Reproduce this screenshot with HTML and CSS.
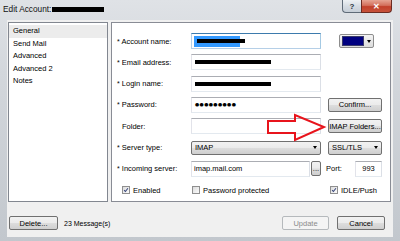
FILE: index.html
```html
<!DOCTYPE html>
<html>
<head>
<meta charset="utf-8">
<link rel="stylesheet" href="styles.css">
</head>
<body>
<div class="window">
  <div class="titlebar">
    <span class="title">Edit Account:</span><span class="redact title-redact"></span>
    <div class="caption">
      <span class="cap cap-help">?</span>
      <span class="cap cap-close">&#x2715;</span>
    </div>
  </div>
  <div class="client">
    <div class="main">
      <ul class="nav">
        <li class="sel">General</li>
        <li>Send Mail</li>
        <li>Advanced</li>
        <li>Advanced 2</li>
        <li>Notes</li>
      </ul>
      <div class="panel">
        <div class="form">
          <div class="row">
            <label class="lbl"><span class="ast">*</span> Account name:</label>
            <div class="inp focus w130"><span class="hl"><span class="redact bar-a"></span></span></div>
            <div class="colorpick"><span class="swatch"></span><span class="cp-drop"><span class="tri"></span></span></div>
          </div>
          <div class="row">
            <label class="lbl"><span class="ast">*</span> Email address:</label>
            <div class="inp w130"><span class="redact bar-b"></span></div>
          </div>
          <div class="row">
            <label class="lbl"><span class="ast">*</span> Login name:</label>
            <div class="inp w130"><span class="redact bar-b"></span></div>
          </div>
          <div class="row">
            <label class="lbl"><span class="ast">*</span> Password:</label>
            <div class="inp w130"><span class="dots">●●●●●●●●●</span></div>
            <button class="btn col3">Confirm...</button>
          </div>
          <div class="row">
            <label class="lbl plain">Folder:</label>
            <div class="inp w130"></div>
            <button class="btn col3">IMAP Folders...</button>
          </div>
          <div class="row">
            <label class="lbl"><span class="ast">*</span> Server type:</label>
            <div class="combo w130"><span>IMAP</span><span class="tri"></span></div>
            <div class="combo col3"><span>SSL/TLS</span><span class="tri"></span></div>
          </div>
          <div class="row">
            <label class="lbl"><span class="ast">*</span> Incoming server:</label>
            <div class="inp w119">imap.mail.com</div>
            <button class="btn dots-btn">...</button>
            <span class="port-lbl">Port:</span>
            <div class="inp port">993</div>
          </div>
          <div class="row checks">
            <label class="chk c1"><span class="box on"><svg viewBox="0 0 8 8"><path d="M1.5 4.2 L3.2 6 L6.6 1.6" /></svg></span>Enabled</label>
            <label class="chk c2"><span class="box"></span>Password protected</label>
            <label class="chk c3"><span class="box on"><svg viewBox="0 0 8 8"><path d="M1.5 4.2 L3.2 6 L6.6 1.6" /></svg></span>IDLE/Push</label>
          </div>
        </div>
      </div>
    </div>
    <div class="footer">
      <button class="btn del">Delete...</button>
      <span class="msgs">23 Message(s)</span>
      <button class="btn upd" disabled>Update</button>
      <button class="btn cancel">Cancel</button>
    </div>
  </div>
  <svg class="arrow" width="400" height="241" viewBox="0 0 400 241">
    <polygon points="268,121 295,121 295,115 324,127 295,140 295,133 268,133" />
  </svg>
</div>
</body>
</html>
```
FILE: styles.css
```css
* { box-sizing: border-box; }
html, body { margin: 0; padding: 0; }
body {
  font-family: "Liberation Sans", Arial, sans-serif;
  font-size: 7.5px;
  color: #000;
  background: #c9ced4;
}
.window {
  position: relative;
  width: 400px;
  height: 241px;
  display: flex;
  flex-direction: column;
  background: linear-gradient(#dfe2e6 0%, #d3d7dc 30%, #c2c7cd 100%);
  overflow: hidden;
}
.titlebar {
  height: 20px;
  display: flex;
  align-items: flex-start;
  padding-left: 3px;
  flex: none;
}
.title {
  font-size: 8.3px;
  line-height: 10px;
  margin-top: 4px;
  color: #111;
}
.redact { display: block; background: #000; }
.title-redact {
  width: 52px;
  height: 5px;
  margin-top: 7px;
  margin-left: 1px;
}
.caption {
  margin-left: auto;
  margin-right: 8px;
  display: flex;
}
.cap {
  height: 13px;
  display: flex;
  align-items: center;
  justify-content: center;
  border: 1px solid #5f6b78;
  border-top: none;
}
.cap-help {
  width: 19px;
  border-right: none;
  border-radius: 0 0 0 4px;
  background: linear-gradient(#eef1f4, #d6dce3 50%, #c6ced7);
  color: #2c3440;
  font-size: 8px;
  font-weight: bold;
}
.cap-close {
  width: 31px;
  border-color: #6b2b22;
  border-radius: 0 0 4px 0;
  background: linear-gradient(#e6a493 0%, #d3705c 45%, #c2402a 55%, #c7523b 100%);
  color: #fff;
  font-size: 8px;
  font-weight: bold;
}
.client {
  flex: 1;
  margin: 0 7px 4px 7px;
  background: #f0f0f0;
  display: flex;
  flex-direction: column;
}
.main {
  display: flex;
  gap: 3px;
  padding: 2px 2px 0 1px;
  height: 182px;
  flex: none;
}
.nav {
  width: 100px;
  margin: 0;
  padding: 2px 0 0 0;
  list-style: none;
  background: #fff;
  border: 1px solid #828790;
}
.nav li {
  height: 12.5px;
  line-height: 12.5px;
  padding-left: 4px;
}
.nav li.sel { background: #ececec; }
.panel {
  flex: 1;
  background: #fff;
  border: 1px solid #898c95;
}
.form {
  display: flex;
  flex-direction: column;
  gap: 5.33px;
  padding: 10px 0 0 5px;
}
.row {
  display: flex;
  align-items: center;
  height: 16px;
}
.lbl {
  width: 74px;
  flex: none;
  white-space: nowrap;
  color: #000;
}
.lbl.plain { padding-left: 5px; }
.ast { font-size: 7px; color: #000; }
.inp {
  height: 16px;
  background: #fff;
  border: 1px solid;
  border-color: #abadb3 #dbdfe6 #e3e9ef #e2e3ea;
  display: flex;
  align-items: center;
  padding-left: 2px;
  flex: none;
  white-space: nowrap;
}
.inp.focus { border-color: #3d7bad #a4c9e3 #b5cfe7 #b5cfe7; }
.w130 { width: 130px; }
.w119 { width: 119px; }
.hl {
  display: flex;
  align-items: center;
  width: 46px;
  height: 11px;
  background: #3399ff;
}
.bar-a { width: 48px; height: 4px; margin-left: 3px; flex: none; }
.bar-b { width: 76px; height: 4px; margin-left: 1px; }
.dots {
  font-family: "DejaVu Sans", sans-serif;
  font-size: 4.8px;
  letter-spacing: 0.4px;
  padding-left: 1px;
}
.colorpick {
  margin-left: 18px;
  width: 35px;
  height: 14px;
  border: 1px solid #8d8d8d;
  border-radius: 2px;
  background: linear-gradient(#f4f4f4, #dcdcdc);
  display: flex;
  align-items: center;
  padding-left: 2px;
}
.swatch {
  width: 22px;
  height: 10px;
  background: #000080;
  border: 1px solid #3a3a6a;
}
.cp-drop {
  flex: 1;
  display: flex;
  justify-content: center;
  align-items: center;
}
.tri {
  width: 0;
  height: 0;
  border-left: 2.5px solid transparent;
  border-right: 2.5px solid transparent;
  border-top: 3px solid #000;
}
.btn {
  font: inherit;
  color: #000;
  height: 14px;
  padding: 0;
  border: 1px solid #707070;
  border-radius: 2px;
  background: linear-gradient(#f2f2f2 0%, #ebebeb 48%, #dddddd 52%, #cfcfcf 100%);
  display: flex;
  align-items: center;
  justify-content: center;
  flex: none;
  white-space: nowrap;
}
.col3 { margin-left: 7px; width: 54px; }
.combo {
  height: 14px;
  border: 1px solid #707070;
  border-radius: 2px;
  background: linear-gradient(#f2f2f2 0%, #ebebeb 48%, #dddddd 52%, #cfcfcf 100%);
  display: flex;
  align-items: center;
  justify-content: space-between;
  padding: 0 3px 0 3px;
  flex: none;
}
.dots-btn {
  margin-left: 1px;
  width: 10px;
  height: 15px;
  align-items: flex-end;
  padding-bottom: 3px;
  line-height: 6px;
}
.port-lbl {
  margin-left: 5px;
  width: 29px;
  flex: none;
}
.port { width: 27px; justify-content: center; padding-left: 0; }
.checks { padding-left: 5px; }
.chk {
  display: flex;
  align-items: center;
  gap: 3px;
  white-space: nowrap;
}
.c1 { width: 70px; }
.c2 { width: 138px; }
.box {
  width: 8px;
  height: 8px;
  border: 1px solid #8f8f8f;
  background: linear-gradient(135deg, #dcdcdc, #fbfbfb);
  display: block;
  flex: none;
}
.box svg { display: block; width: 6px; height: 6px; }
.box path { fill: none; stroke: #37457a; stroke-width: 1.4; }
.footer {
  display: flex;
  align-items: center;
  margin-top: 14px;
  padding: 0 8px 0 2px;
}
.del { width: 49px; }
.msgs { margin-left: 6px; font-size: 7px; }
.upd {
  margin-left: auto;
  width: 47px;
  color: #8b8b8b;
  border-color: #b5b9bc;
  background: #f4f4f4;
}
.cancel { margin-left: 8px; width: 48px; }
.arrow {
  position: absolute;
  left: 0;
  top: 0;
  pointer-events: none;
}
.arrow polygon {
  fill: none;
  stroke: #e8141c;
  stroke-width: 2;
  stroke-linejoin: miter;
}
```
